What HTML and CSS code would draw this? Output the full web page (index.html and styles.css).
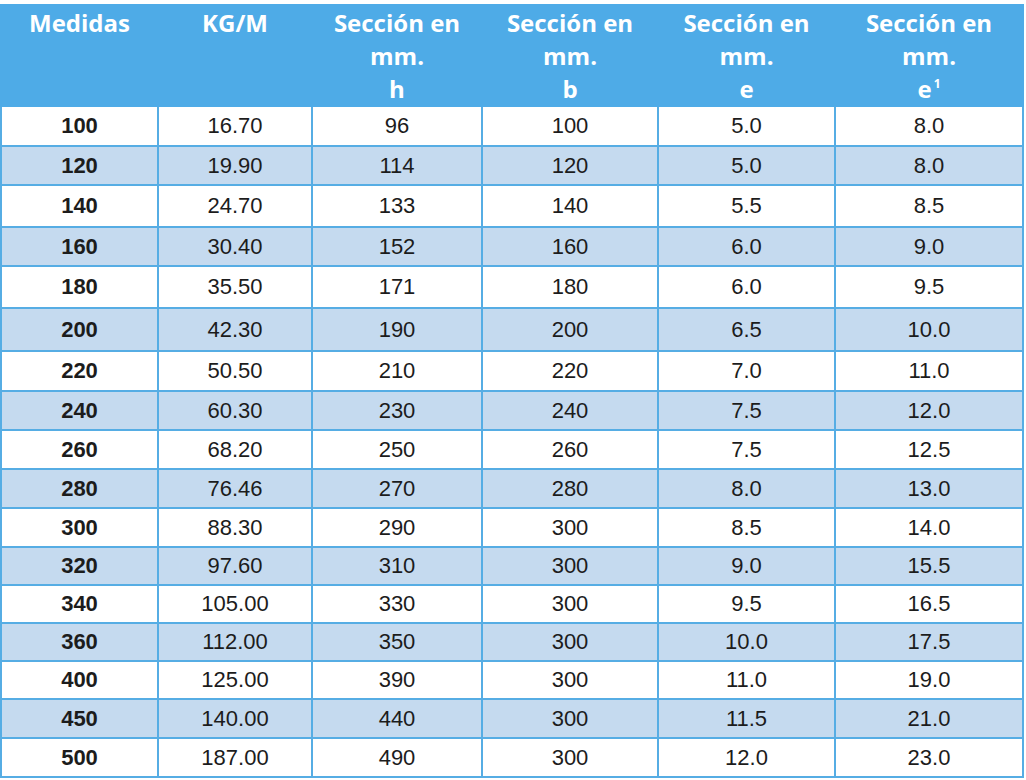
FILE: index.html
```html
<!DOCTYPE html>
<html lang="es">
<head>
<meta charset="utf-8">
<title>Medidas</title>
<link rel="stylesheet" href="styles.css">
</head>
<body>
<div class="wrap">
<table class="specs">
  <colgroup>
    <col class="c1"><col class="c2"><col class="c3"><col class="c4"><col class="c5"><col class="c6">
  </colgroup>
  <thead>
    <tr>
      <th>Medidas</th>
      <th>KG/M</th>
      <th>Sección en<br>mm.<br>h</th>
      <th>Sección en<br>mm.<br>b</th>
      <th>Sección en<br>mm.<br>e</th>
      <th>Sección en<br>mm.<br>e<sup>1</sup></th>
    </tr>
  </thead>
  <tbody>
    <tr class="h40"><td>100</td><td>16.70</td><td>96</td><td>100</td><td>5.0</td><td>8.0</td></tr>
    <tr><td>120</td><td>19.90</td><td>114</td><td>120</td><td>5.0</td><td>8.0</td></tr>
    <tr class="h42"><td>140</td><td>24.70</td><td>133</td><td>140</td><td>5.5</td><td>8.5</td></tr>
    <tr><td>160</td><td>30.40</td><td>152</td><td>160</td><td>6.0</td><td>9.0</td></tr>
    <tr class="h42"><td>180</td><td>35.50</td><td>171</td><td>180</td><td>6.0</td><td>9.5</td></tr>
    <tr class="h43"><td>200</td><td>42.30</td><td>190</td><td>200</td><td>6.5</td><td>10.0</td></tr>
    <tr class="h40"><td>220</td><td>50.50</td><td>210</td><td>220</td><td>7.0</td><td>11.0</td></tr>
    <tr><td>240</td><td>60.30</td><td>230</td><td>240</td><td>7.5</td><td>12.0</td></tr>
    <tr><td>260</td><td>68.20</td><td>250</td><td>260</td><td>7.5</td><td>12.5</td></tr>
    <tr><td>280</td><td>76.46</td><td>270</td><td>280</td><td>8.0</td><td>13.0</td></tr>
    <tr><td>300</td><td>88.30</td><td>290</td><td>300</td><td>8.5</td><td>14.0</td></tr>
    <tr class="h38"><td>320</td><td>97.60</td><td>310</td><td>300</td><td>9.0</td><td>15.5</td></tr>
    <tr class="h38"><td>340</td><td>105.00</td><td>330</td><td>300</td><td>9.5</td><td>16.5</td></tr>
    <tr class="h38"><td>360</td><td>112.00</td><td>350</td><td>300</td><td>10.0</td><td>17.5</td></tr>
    <tr class="h38"><td>400</td><td>125.00</td><td>390</td><td>300</td><td>11.0</td><td>19.0</td></tr>
    <tr><td>450</td><td>140.00</td><td>440</td><td>300</td><td>11.5</td><td>21.0</td></tr>
    <tr><td>500</td><td>187.00</td><td>490</td><td>300</td><td>12.0</td><td>23.0</td></tr>
  </tbody>
</table>
</div>
</body>
</html>
```

FILE: styles.css
```css
html, body {
  margin: 0;
  padding: 0;
  background: #ffffff;
}

.wrap {
  padding-top: 4px;
  width: 1022px;
}

.specs {
  border-collapse: collapse;
  table-layout: fixed;
  width: 1022px;
  font-family: "Liberation Sans", Arial, sans-serif;
}

.c1 { width: 157px; }
.c2 { width: 154px; }
.c3 { width: 170px; }
.c4 { width: 176px; }
.c5 { width: 177px; }
.c6 { width: 188px; }

.specs th {
  background: #4eabe7;
  color: #ffffff;
  font-family: "Open Sans", "DejaVu Sans", sans-serif;
  font-weight: 700;
  font-size: 24px;
  line-height: 33px;
  vertical-align: top;
  text-align: center;
  padding: 0;
  height: 94px;
  border: 2px solid #4eabe7;
  box-sizing: border-box;
}

.specs th sup {
  font-size: 12px;
  line-height: 0;
  vertical-align: 10px;
  margin-left: 2px;
}

.specs td {
  border: 2px solid #56ade4;
  height: 39px;
  padding: 0;
  box-sizing: border-box;
  text-align: center;
  vertical-align: middle;
  font-size: 22px;
  color: #1c1c1c;
}

.specs td:first-child {
  font-weight: 700;
}

.specs tbody tr:nth-child(even) td {
  background: #c5daef;
}

.specs tr.h38 td { height: 38px; }
.specs tr.h40 td { height: 40px; }
.specs tr.h42 td { height: 42px; }
.specs tr.h43 td { height: 43px; }
```
